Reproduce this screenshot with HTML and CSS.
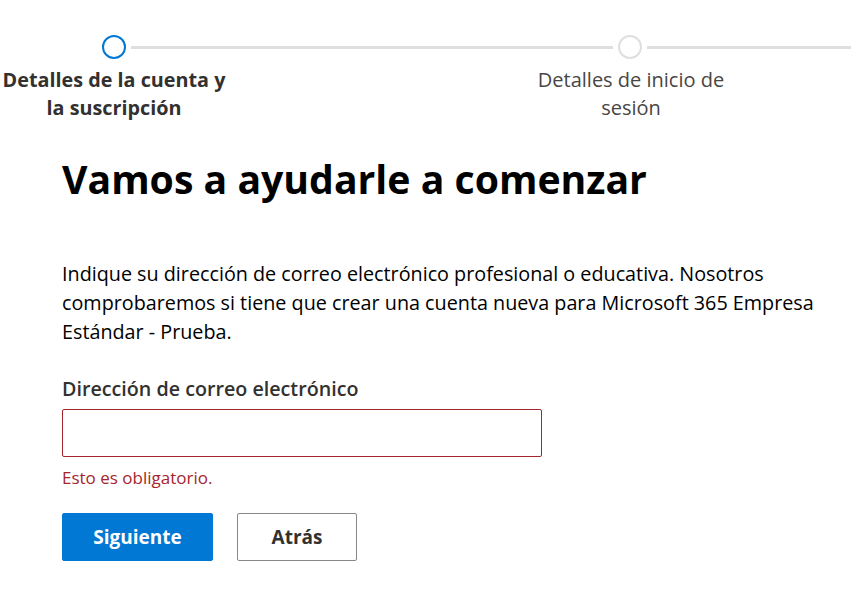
FILE: index.html
```html
<!DOCTYPE html>
<html lang="es">
<head>
  <meta charset="UTF-8" />
  <meta name="viewport" content="width=device-width, initial-scale=1.0"/>
  <title>Microsoft 365 Empresa Estándar - Prueba</title>
  <link rel="stylesheet" href="styles.css">
</head>
<body>

  <div class="stepper">
    <div class="track">
      <span class="dot active"></span>
      <span class="bar first"></span>
      <span class="dot"></span>
      <span class="bar"></span>
    </div>
    <div class="step-labels">
      <span class="step-label active">Detalles de la cuenta y la suscripción</span>
      <span class="step-label">Detalles de inicio de sesión</span>
    </div>
  </div>

  <main class="signup">
    <h1>Vamos a ayudarle a comenzar</h1>

    <p class="intro">Indique su dirección de correo electrónico profesional o educativa. Nosotros comprobaremos si tiene que crear una cuenta nueva para Microsoft 365 Empresa Estándar - Prueba.</p>

    <form class="email-form" onsubmit="return false">
      <label for="email">Dirección de correo electrónico</label>
      <input type="email" id="email" class="invalid">
      <p class="error">Esto es obligatorio.</p>

      <div class="actions">
        <button type="submit" class="btn primary">Siguiente</button>
        <button type="button" class="btn secondary">Atrás</button>
      </div>
    </form>
  </main>

</body>
</html>
```

FILE: styles.css
```css
* {
  margin: 0;
  padding: 0;
  box-sizing: border-box;
}

body {
  font-family: 'Open Sans', 'Noto Sans', sans-serif;
  background: #fff;
  color: #323130;
  overflow: hidden;
}

/* Progress steps */
.stepper {
  padding-top: 35px;
}

.track {
  display: flex;
  align-items: center;
  gap: 5px;
  padding-left: 102px;
}

.dot {
  width: 24px;
  height: 24px;
  border-radius: 50%;
  border: 2px solid #e1dfdd;
  flex-shrink: 0;
}

.dot.active {
  border-color: #0078d4;
}

.bar {
  height: 3px;
  background: #e1dfdd;
  flex: 1;
}

.bar.first {
  flex: 0 0 482px;
}

.step-labels {
  display: grid;
  grid-template-columns: 228px 228px;
  column-gap: 289px;
  margin-top: 7px;
}

.step-label {
  text-align: center;
  font-size: 20px;
  line-height: 28px;
  color: #484644;
}

.step-label.active {
  font-weight: 700;
  font-size: 19.8px;
  color: #323130;
}

/* Form */
.signup {
  padding: 0 20px 0 62px;
}

h1 {
  font-size: 39.2px;
  font-weight: 700;
  color: #000;
  margin-top: 29px;
  line-height: 56px;
}

.intro {
  font-size: 19.75px;
  line-height: 29px;
  color: #000;
  margin-top: 52px;
  max-width: 760px;
}

.email-form {
  margin-top: 30px;
}

.email-form label {
  display: block;
  font-size: 19.7px;
  font-weight: 600;
  line-height: 26px;
}

#email {
  display: block;
  width: 480px;
  height: 48px;
  margin-top: 7px;
  border: 1px solid #8a8886;
  border-radius: 2px;
  font: inherit;
  padding: 0 10px;
}

#email.invalid {
  border-color: #a4262c;
}

.error {
  font-size: 17px;
  line-height: 22px;
  color: #a4262c;
  margin-top: 10px;
}

.actions {
  display: flex;
  gap: 24px;
  margin-top: 24px;
}

.btn {
  height: 48px;
  border-radius: 2px;
  font-family: inherit;
  font-size: 19px;
  font-weight: 700;
  cursor: pointer;
}

.btn.primary {
  width: 151px;
  background: #0078d4;
  border: 1px solid #0078d4;
  color: #fff;
}

.btn.secondary {
  width: 120px;
  background: #fff;
  border: 1px solid #8a8886;
  color: #323130;
}
```
